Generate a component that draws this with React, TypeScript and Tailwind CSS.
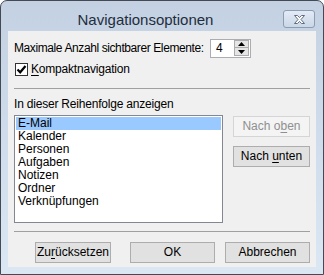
const items = ["E-Mail", "Kalender", "Personen", "Aufgaben", "Notizen", "Ordner", "Verknüpfungen"];

function Btn({ children, className = "", disabled = false }: { children: React.ReactNode; className?: string; disabled?: boolean }) {
  return (
    <div
      className={
        "flex h-[21px] items-center justify-center border text-[12px] leading-[13px] " +
        (disabled ? "border-[#d5d5d5] bg-[#f4f4f4] text-[#8f8f8f] " : "border-[#adadad] bg-[#e1e1e1] text-black ") +
        className
      }
    >
      <span className="whitespace-pre">{children}</span>
    </div>
  );
}

function CloseButton() {
  return (
    <div className="flex h-[18px] w-[32px] items-center justify-center rounded-[3px] border border-[#8c9cb1] bg-gradient-to-b from-[#e3ebf5] to-[#cad7e7]">
      <svg width="13" height="11" viewBox="0 0 13 11">
        <path
          d="M1.5 1.5 H4.5 L6.5 3.6 L8.5 1.5 H11.5 L8 5.5 L11.5 9.5 H8.5 L6.5 7.4 L4.5 9.5 H1.5 L5 5.5 Z"
          fill="#ffffff"
          stroke="#5d6d82"
          strokeWidth="1"
          strokeLinejoin="round"
        />
      </svg>
    </div>
  );
}

export default function App() {
  return (
    <div className="flex h-[275px] w-[324px] flex-col rounded-t-[7px] border border-[#434a54] bg-gradient-to-b from-[#c3d1e2] to-[#dce7f4] font-['Liberation_Sans',Arial,sans-serif] text-[12px] leading-[13px] text-black">
      {/* title bar */}
      <div className="flex h-[30px] items-start">
        <div className="flex-1 pl-[7px] pt-[11px] text-center text-[15px] leading-[15px] text-[#1f2d3d]">
          Navigationsoptionen
        </div>
        <div className="mr-[8px] mt-[9px]">
          <CloseButton />
        </div>
      </div>

      {/* client area */}
      <div className="mx-[7px] mb-[7px] flex flex-1 flex-col bg-[#f0f0f0] px-[6px]">
        <div className="mt-[8px] flex h-[18px] items-center">
          <span className="w-[189px] whitespace-nowrap tracking-[-0.4px]">Maximale Anzahl sichtbarer Elemente:</span>
          <div className="ml-[7px] flex h-[19px] w-[41px] items-center justify-between border border-[#abadb3] bg-white pl-[5px] pr-px">
            <span>4</span>
            <div className="flex flex-col">
              <div className="flex h-[8px] w-[15px] items-center justify-center border border-[#acacac] bg-[#e5e5e5]">
                <svg width="7" height="4" viewBox="0 0 7 4">
                  <path d="M3.5 0 L7 4 H0 Z" fill="#000" />
                </svg>
              </div>
              <div className="flex h-[8px] w-[15px] items-center justify-center border border-t-0 border-[#acacac] bg-[#e5e5e5]">
                <svg width="7" height="4" viewBox="0 0 7 4">
                  <path d="M0 0 H7 L3.5 4 Z" fill="#000" />
                </svg>
              </div>
            </div>
          </div>
        </div>

        <div className="mt-[6px] flex items-center">
          <div className="ml-px flex h-[13px] w-[13px] items-center justify-center border border-[#333333] bg-white">
            <svg width="11" height="11" viewBox="0 0 11 11">
              <path d="M1.5 5.5 L4.2 8.3 L9.5 2" fill="none" stroke="#000" strokeWidth="2.2" />
            </svg>
          </div>
          <span className="ml-[3px] tracking-[-0.2px]">
            <span className="underline underline-offset-2">K</span>ompaktnavigation
          </span>
        </div>

        <div className="mt-[12px] h-px bg-[#a0a0a0]" />

        <div className="mt-[9px] tracking-[-0.2px]">In dieser Reihenfolge anzeigen</div>

        <div className="mt-[4px] flex">
          <div className="h-[108px] w-[209px] border border-[#828790] bg-white p-px">
            {items.map((item, i) => (
              <div
                key={item}
                className={"h-[13px] pl-[2px] " + (i === 0 ? "bg-[#99c9ff]" : "")}
              >
                {item}
              </div>
            ))}
          </div>
          <div className="ml-[10px] mt-px flex flex-col gap-[9px]">
            <Btn disabled className="w-[77px]">
              Nach o<span className="underline underline-offset-2">b</span>en
            </Btn>
            <Btn className="w-[77px]">
              {"Nach "}<span className="underline underline-offset-2">u</span>nten
            </Btn>
          </div>
        </div>

        <div className="mt-[8px] h-px bg-[#a0a0a0]" />

        <div className="mt-[10px] flex">
          <Btn className="ml-[21px] w-[76px]">
            Zu<span className="underline underline-offset-2">r</span>ücksetzen
          </Btn>
          <Btn className="ml-[19px] w-[85px]">OK</Btn>
          <Btn className="ml-[10px] w-[85px]">Abbrechen</Btn>
        </div>
      </div>
    </div>
  );
}
